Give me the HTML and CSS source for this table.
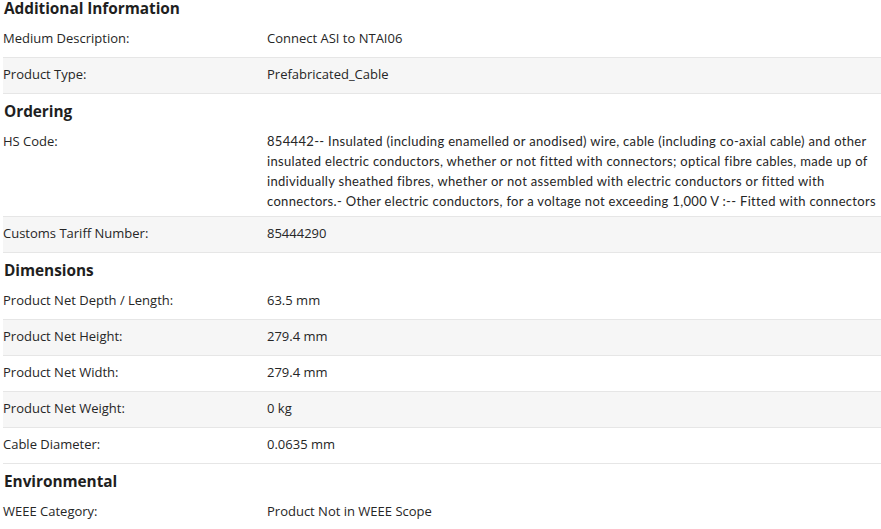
FILE: index.html
```html
<!DOCTYPE html>
<html lang="en">
<head>
<meta charset="utf-8">
<title>Product details</title>
<link rel="stylesheet" href="styles.css">
</head>
<body>
<div class="spec">
  <section class="section">
    <h2 class="heading">Additional Information</h2>
    <div class="row"><div class="label">Medium Description:</div><div class="value">Connect ASI to NTAI06</div></div>
    <div class="row alt"><div class="label">Product Type:</div><div class="value">Prefabricated_Cable</div></div>
  </section>
  <section class="section">
    <h2 class="heading">Ordering</h2>
    <div class="row"><div class="label">HS Code:</div><div class="value long">854442-- Insulated (including enamelled or anodised) wire, cable (including co-axial cable) and other insulated electric conductors, whether or not fitted with connectors; optical fibre cables, made up of individually sheathed fibres, whether or not assembled with electric conductors or fitted with connectors.- Other electric conductors, for a voltage not exceeding 1,000 V :-- Fitted with connectors</div></div>
    <div class="row alt"><div class="label">Customs Tariff Number:</div><div class="value">85444290</div></div>
  </section>
  <section class="section">
    <h2 class="heading">Dimensions</h2>
    <div class="row"><div class="label">Product Net Depth / Length:</div><div class="value">63.5 mm</div></div>
    <div class="row alt"><div class="label">Product Net Height:</div><div class="value">279.4 mm</div></div>
    <div class="row"><div class="label">Product Net Width:</div><div class="value">279.4 mm</div></div>
    <div class="row alt"><div class="label">Product Net Weight:</div><div class="value">0 kg</div></div>
    <div class="row"><div class="label">Cable Diameter:</div><div class="value">0.0635 mm</div></div>
  </section>
  <section class="section">
    <h2 class="heading">Environmental</h2>
    <div class="row"><div class="label">WEEE Category:</div><div class="value">Product Not in WEEE Scope</div></div>
  </section>
</div>
</body>
</html>
```
FILE: styles.css
```css
html, body {
  margin: 0;
  padding: 0;
  background: #ffffff;
}
body {
  font-family: "Open Sans", "Noto Sans", sans-serif;
  font-size: 13px;
  color: #262626;
}
.spec {
  padding-left: 3px;
}
.heading {
  margin: 8px 0 3px;
  padding-left: 1px;
  font-size: 15.4px;
  line-height: 20px;
  font-weight: 700;
  color: #1f1f1f;
  letter-spacing: -0.05px;
}
.section:first-child .heading {
  margin-top: 0;
  margin-bottom: 4px;
  line-height: 18px;
}
.row {
  display: grid;
  grid-template-columns: 264px 1fr;
  box-sizing: border-box;
  min-height: 36px;
  padding: 6px 0 5px;
  line-height: 20px;
  border-bottom: 1px solid #e6e6e6;
}
.row.alt {
  background: #f6f6f6;
}
.value.long {
  font-family: "Lato", "Open Sans", sans-serif;
  letter-spacing: 0.32px;
}
```
